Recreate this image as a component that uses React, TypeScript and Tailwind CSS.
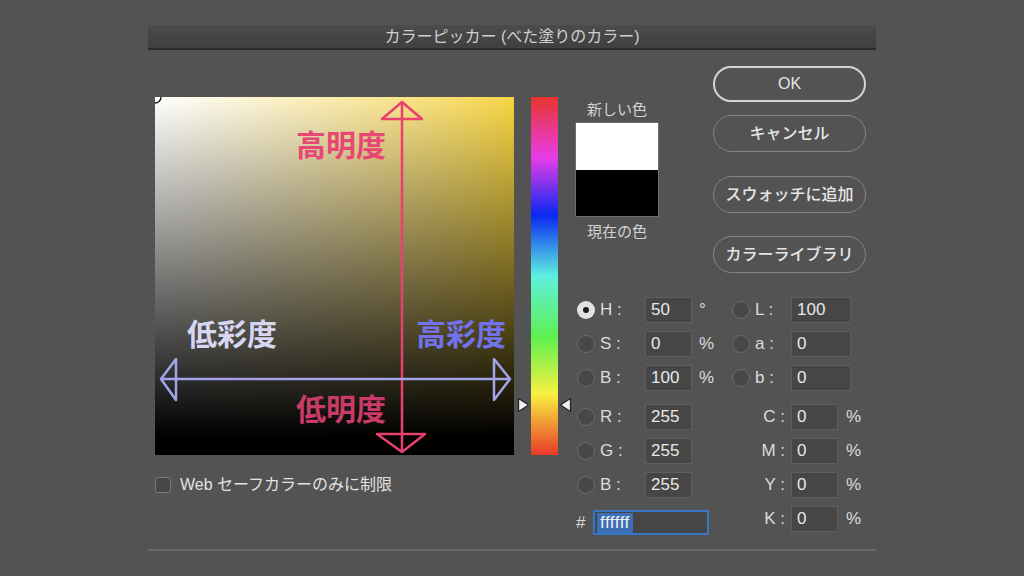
import React from "react";

const font = "font-['Liberation_Sans','Noto_Sans_CJK_JP',sans-serif]";

function Radio({ on }: { on?: boolean }) {
  if (on) {
    return (
      <span className="w-[18px] h-[18px] rounded-full bg-[#e2e2e2] flex items-center justify-center shrink-0">
        <span className="w-[6px] h-[6px] rounded-full bg-[#1e1e1e]" />
      </span>
    );
  }
  return <span className="w-[18px] h-[18px] rounded-full bg-[#484848] border border-[#6c6c6c] shrink-0" />;
}

function Field({ value, w }: { value: string; w: string }) {
  return (
    <div className={`${w} h-[26px] bg-[#464646] border border-[#5e5e5e] flex items-center pl-[5px] text-[17px] text-[#e8e8e8]`}>
      {value}
    </div>
  );
}

function RadioRow({ label, value, unit, on }: { label: string; value: string; unit?: string; on?: boolean }) {
  return (
    <div className="flex items-center h-[26px] pl-[2px]">
      <Radio on={on} />
      <span className="w-[50px] pl-[5px] text-[17px] font-medium text-[#dcdcdc]">{label}</span>
      <Field value={value} w="w-[47px]" />
      {unit && <span className="ml-[7px] text-[17px] text-[#dcdcdc]">{unit}</span>}
    </div>
  );
}

function LabRow({ label, value }: { label: string; value: string }) {
  return (
    <div className="flex items-center h-[26px]">
      <Radio />
      <span className="w-[41px] pl-[5px] text-[17px] font-medium text-[#dcdcdc]">{label}</span>
      <Field value={value} w="w-[60px]" />
    </div>
  );
}

function CmykRow({ label }: { label: string }) {
  return (
    <div className="flex items-center h-[26px]">
      <span className="w-[59px] pr-[6px] text-right text-[17px] font-medium text-[#dcdcdc]">{label}</span>
      <Field value="0" w="w-[47px]" />
      <span className="ml-[8px] text-[17px] text-[#dcdcdc]">%</span>
    </div>
  );
}

function PillButton({ children, primary, h, mt }: { children: React.ReactNode; primary?: boolean; h: string; mt: string }) {
  return (
    <button
      className={`w-[153px] ${h} ${mt} rounded-full flex items-center justify-center text-[16px] font-medium text-[#e6e6e6] ${
        primary ? "border-2 border-[#d4d4d4]" : "border border-[#858585]"
      }`}
    >
      {children}
    </button>
  );
}

export default function App() {
  return (
    <div className={`w-[1024px] h-[576px] bg-[#535353] flex justify-center pt-[25px] ${font}`}>
      <div className="w-[728px] flex flex-col">
        {/* title bar */}
        <div className="h-[25px] bg-linear-to-b from-[#4b4b4b] to-[#404040] border-b-2 border-[#2a2a2a] flex items-center justify-center text-[16px] text-[#cfcfcf]">
          カラーピッカー (べた塗りのカラー)
        </div>

        <div className="h-[499px] flex items-start pl-[7px]">
          {/* color field */}
          <div className="mt-[47px] flex flex-col">
            <div className="relative w-[359px] h-[358px] bg-linear-to-r from-white to-[#f8d640]">
              <div className="absolute inset-0 bg-linear-to-t from-black from-[5%] to-transparent" />
              <div className="absolute inset-0 overflow-hidden">
                <svg width="359" height="358" className="absolute left-0 top-0">
                  <circle cx="0" cy="0" r="6" fill="none" stroke="#1e1e1e" strokeWidth="1.5" />
                  <g stroke="#e8416f" strokeWidth="2.5" fill="none" strokeLinejoin="round">
                    <line x1="247" y1="5" x2="247" y2="355" />
                    <polygon points="247,5 227,22 267,22" />
                    <polygon points="222,337 270,337 247,355" />
                  </g>
                  <g stroke="#a3a3ea" strokeWidth="2.5" fill="none" strokeLinejoin="round">
                    <line x1="6" y1="282" x2="355" y2="282" />
                    <polygon points="6,282 21,262 21,303" />
                    <polygon points="355,282 339,262 339,303" />
                  </g>
                </svg>
              </div>
              <span className="absolute left-[141px] top-[28px] text-[30px] leading-[36px] font-bold text-[#e84674] font-['Noto_Sans_CJK_JP',sans-serif]">
                高明度
              </span>
              <span className="absolute left-[141px] top-[292px] text-[30px] leading-[36px] font-bold text-[#c93b68] font-['Noto_Sans_CJK_JP',sans-serif]">
                低明度
              </span>
              <span className="absolute left-[32px] top-[217px] text-[30px] leading-[36px] font-bold text-[#d6d6f2] font-['Noto_Sans_CJK_JP',sans-serif]">
                低彩度
              </span>
              <span className="absolute left-[261px] top-[217px] text-[30px] leading-[36px] font-bold text-[#7272ec] font-['Noto_Sans_CJK_JP',sans-serif]">
                高彩度
              </span>
            </div>
            <div className="mt-[20px] h-[20px] flex items-center">
              <span className="w-[16px] h-[16px] rounded-[3px] bg-[#474747] border border-[#7a7a7a]" />
              <span className="ml-[9px] text-[16px] text-[#e2e2e2]">Web セーフカラーのみに制限</span>
            </div>
          </div>

          {/* hue slider */}
          <div className="relative ml-[17px] mt-[47px] w-[27px] h-[358px] bg-[linear-gradient(to_bottom,#e8342c,#e83ce8_17%,#0a28f0_33%,#5ef0e0_50%,#5ef050_67%,#f8f040_83%,#e83a28)]">
            <svg width="14" height="16" className="absolute left-[-15px] top-[300px]">
              <path d="M2.5 2 Q2 1.5 3 1.8 L11.5 7.2 Q12.5 8 11.5 8.8 L3 14.2 Q2 14.5 2.5 14 Z" fill="#f0f0f0" stroke="#262626" strokeWidth="1.3" strokeLinejoin="round" />
            </svg>
            <svg width="14" height="16" className="absolute right-[-15px] top-[300px]">
              <path d="M11.5 2 Q12 1.5 11 1.8 L2.5 7.2 Q1.5 8 2.5 8.8 L11 14.2 Q12 14.5 11.5 14 Z" fill="#f0f0f0" stroke="#262626" strokeWidth="1.3" strokeLinejoin="round" />
            </svg>
          </div>

          {/* right side */}
          <div className="ml-[17px] pt-[16px] w-[301px] flex flex-col">
            <div className="flex items-start">
              <div className="w-[84px] mt-[34px] flex flex-col items-center">
                <span className="h-[20px] mb-[2px] text-[15px] text-[#d2d2d2] leading-[20px]">新しい色</span>
                <div className="w-[84px] h-[95px] border border-[#6e6e6e] flex flex-col">
                  <div className="h-[47px] bg-white" />
                  <div className="flex-1 bg-black" />
                </div>
                <span className="h-[20px] mt-[5px] text-[15px] text-[#d2d2d2] leading-[20px]">現在の色</span>
              </div>
              <div className="ml-[54px] flex flex-col">
                <PillButton primary h="h-[36px]" mt="mt-0">OK</PillButton>
                <PillButton h="h-[37px]" mt="mt-[13px]">キャンセル</PillButton>
                <PillButton h="h-[37px]" mt="mt-[24px]">スウォッチに追加</PillButton>
                <PillButton h="h-[37px]" mt="mt-[23px]">カラーライブラリ</PillButton>
              </div>
            </div>

            <div className="mt-[24px] flex">
              <div className="w-[157px] flex flex-col gap-[8px]">
                <RadioRow on label="H :" value="50" unit="°" />
                <RadioRow label="S :" value="0" unit="%" />
                <RadioRow label="B :" value="100" unit="%" />
                <div className="mt-[5px]">
                  <RadioRow label="R :" value="255" />
                </div>
                <RadioRow label="G :" value="255" />
                <RadioRow label="B :" value="255" />
                <div className="mt-[4px] flex items-center h-[25px]">
                  <span className="w-[18px] pl-[1px] text-[17px] text-[#d6d6d6]">#</span>
                  <div className="w-[116px] h-[25px] border-2 border-[#3a76c6] bg-[#464646] flex items-center pl-[2px]">
                    <span className="bg-[#3d6fb5] text-[17px] leading-[20px] tracking-[0.5px] text-[#f0f0f0] px-[3px]">ffffff</span>
                  </div>
                </div>
              </div>
              <div className="flex flex-col gap-[8px]">
                <LabRow label="L :" value="100" />
                <LabRow label="a :" value="0" />
                <LabRow label="b :" value="0" />
                <div className="mt-[5px]">
                  <CmykRow label="C :" />
                </div>
                <CmykRow label="M :" />
                <CmykRow label="Y :" />
                <CmykRow label="K :" />
              </div>
            </div>
          </div>
        </div>

        <div className="h-[2px] bg-[#6a6a6a]" />
      </div>
    </div>
  );
}
